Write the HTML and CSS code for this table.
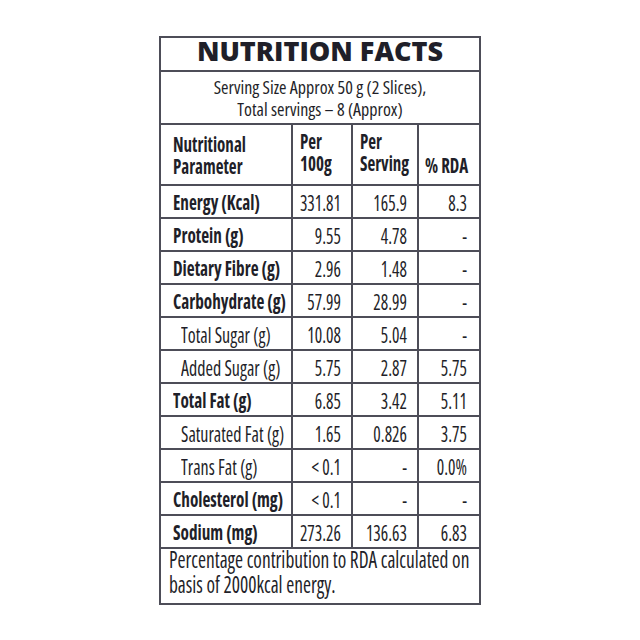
FILE: index.html
```html
<!DOCTYPE html>
<html>
<head>
<meta charset="utf-8">
<link rel="stylesheet" href="styles.css">
</head>
<body>
<div class="label">
  <div class="title">NUTRITION FACTS</div>
  <div class="serving">Serving Size Approx 50 g (2 Slices),<br>Total servings – 8 (Approx)</div>
  <table class="facts">
    <colgroup><col class="c1"><col class="c2"><col class="c3"><col class="c4"></colgroup>
    <tr class="head">
      <th class="param"><div class="hd">Nutritional<br>Parameter</div></th>
      <th class="per"><div class="hd">Per<br>100g</div></th>
      <th class="per"><div class="hd">Per<br>Serving</div></th>
      <th class="rda"><div class="hd">% RDA</div></th>
    </tr>
    <tr><td class="name b"><span class="t">Energy (Kcal)</span></td><td><span class="t">331.81</span></td><td><span class="t">165.9</span></td><td><span class="t">8.3</span></td></tr>
    <tr><td class="name b"><span class="t">Protein (g)</span></td><td><span class="t">9.55</span></td><td><span class="t">4.78</span></td><td><span class="t">-</span></td></tr>
    <tr><td class="name b"><span class="t">Dietary Fibre (g)</span></td><td><span class="t">2.96</span></td><td><span class="t">1.48</span></td><td><span class="t">-</span></td></tr>
    <tr><td class="name b"><span class="t">Carbohydrate (g)</span></td><td><span class="t">57.99</span></td><td><span class="t">28.99</span></td><td><span class="t">-</span></td></tr>
    <tr><td class="name sub"><span class="t">Total Sugar (g)</span></td><td><span class="t">10.08</span></td><td><span class="t">5.04</span></td><td><span class="t">-</span></td></tr>
    <tr><td class="name sub"><span class="t">Added Sugar (g)</span></td><td><span class="t">5.75</span></td><td><span class="t">2.87</span></td><td><span class="t">5.75</span></td></tr>
    <tr><td class="name b"><span class="t">Total Fat (g)</span></td><td><span class="t">6.85</span></td><td><span class="t">3.42</span></td><td><span class="t">5.11</span></td></tr>
    <tr><td class="name sub"><span class="t">Saturated Fat (g)</span></td><td><span class="t">1.65</span></td><td><span class="t">0.826</span></td><td><span class="t">3.75</span></td></tr>
    <tr><td class="name sub"><span class="t">Trans Fat (g)</span></td><td><span class="t">&lt; 0.1</span></td><td><span class="t">-</span></td><td><span class="t">0.0%</span></td></tr>
    <tr><td class="name b"><span class="t">Cholesterol (mg)</span></td><td><span class="t">&lt; 0.1</span></td><td><span class="t">-</span></td><td><span class="t">-</span></td></tr>
    <tr><td class="name b"><span class="t">Sodium (mg)</span></td><td><span class="t">273.26</span></td><td><span class="t">136.63</span></td><td><span class="t">6.83</span></td></tr>
    <tr class="foot"><td colspan="4"><div class="note">Percentage contribution to RDA calculated on<br>basis of 2000kcal energy.</div></td></tr>
  </table>
</div>
</body>
</html>
```
FILE: styles.css
```css
html, body {
  margin: 0;
  padding: 0;
  background: #ffffff;
}
body {
  font-family: "Open Sans", "DejaVu Sans Condensed", sans-serif;
  font-stretch: 75%;
  color: #1f1f29;
}
.label {
  margin: 36px 0 0 159px;
  width: 318px;
  border: 2px solid #4d4d58;
  display: flex;
  flex-direction: column;
}
.title {
  height: 34px;
  box-sizing: border-box;
  border-bottom: 2px solid #4d4d58;
  padding-bottom: 6px;
  text-align: center;
  font-weight: 800;
  font-stretch: 88%;
  font-size: 27px;
  line-height: 26px;
}
.serving {
  height: 51px;
  box-sizing: border-box;
  text-align: center;
  font-size: 18px;
  font-stretch: 78%;
  line-height: 22px;
  padding-top: 4px;
}
.facts {
  border-collapse: collapse;
  width: 100%;
  table-layout: fixed;
  font-size: 17.5px;
}
.c1 { width: 131px; }
.c2 { width: 60px; }
.c3 { width: 66px; }
.c4 { width: 61px; }
.facts td, .facts th {
  border: 2px solid #4d4d58;
  padding: 0;
  text-align: right;
  white-space: nowrap;
}
.facts td { height: 31px; padding-right: 10px; }
.facts td:nth-child(4) { padding-right: 12px; }
.facts tr td:first-child, .facts tr th:first-child { border-left: none; }
.facts tr td:last-child, .facts tr th:last-child { border-right: none; }
.t {
  display: inline-block;
  transform: scaleY(1.25);
}
.head th {
  font-weight: 700;
  font-size: 17px;
  vertical-align: bottom;
  text-align: left;
}
.hd {
  line-height: 17.7px;
  transform: scaleY(1.24);
  transform-origin: left bottom;
}
.head th.param { padding: 0 0 7px 12px; height: 52px; }
.head th.per { padding: 0 0 10px 7px; height: 49px; }
.head th.rda { padding: 0 0 7px 6px; height: 52px; }
.facts td.name {
  text-align: left;
  padding-left: 12px;
  padding-right: 0;
}
.facts td.b { font-weight: 700; font-size: 17.2px; }
.facts td.sub { padding-left: 20px; font-size: 18px; }
.foot td {
  border-bottom: none;
  text-align: left;
  vertical-align: top;
  height: 54px;
  padding: 0 0 0 8px;
  white-space: nowrap;
}
.note {
  margin-top: 3px;
  font-size: 19.4px;
  line-height: 20.3px;
  transform: scaleY(1.23);
  transform-origin: left center;
}
```
